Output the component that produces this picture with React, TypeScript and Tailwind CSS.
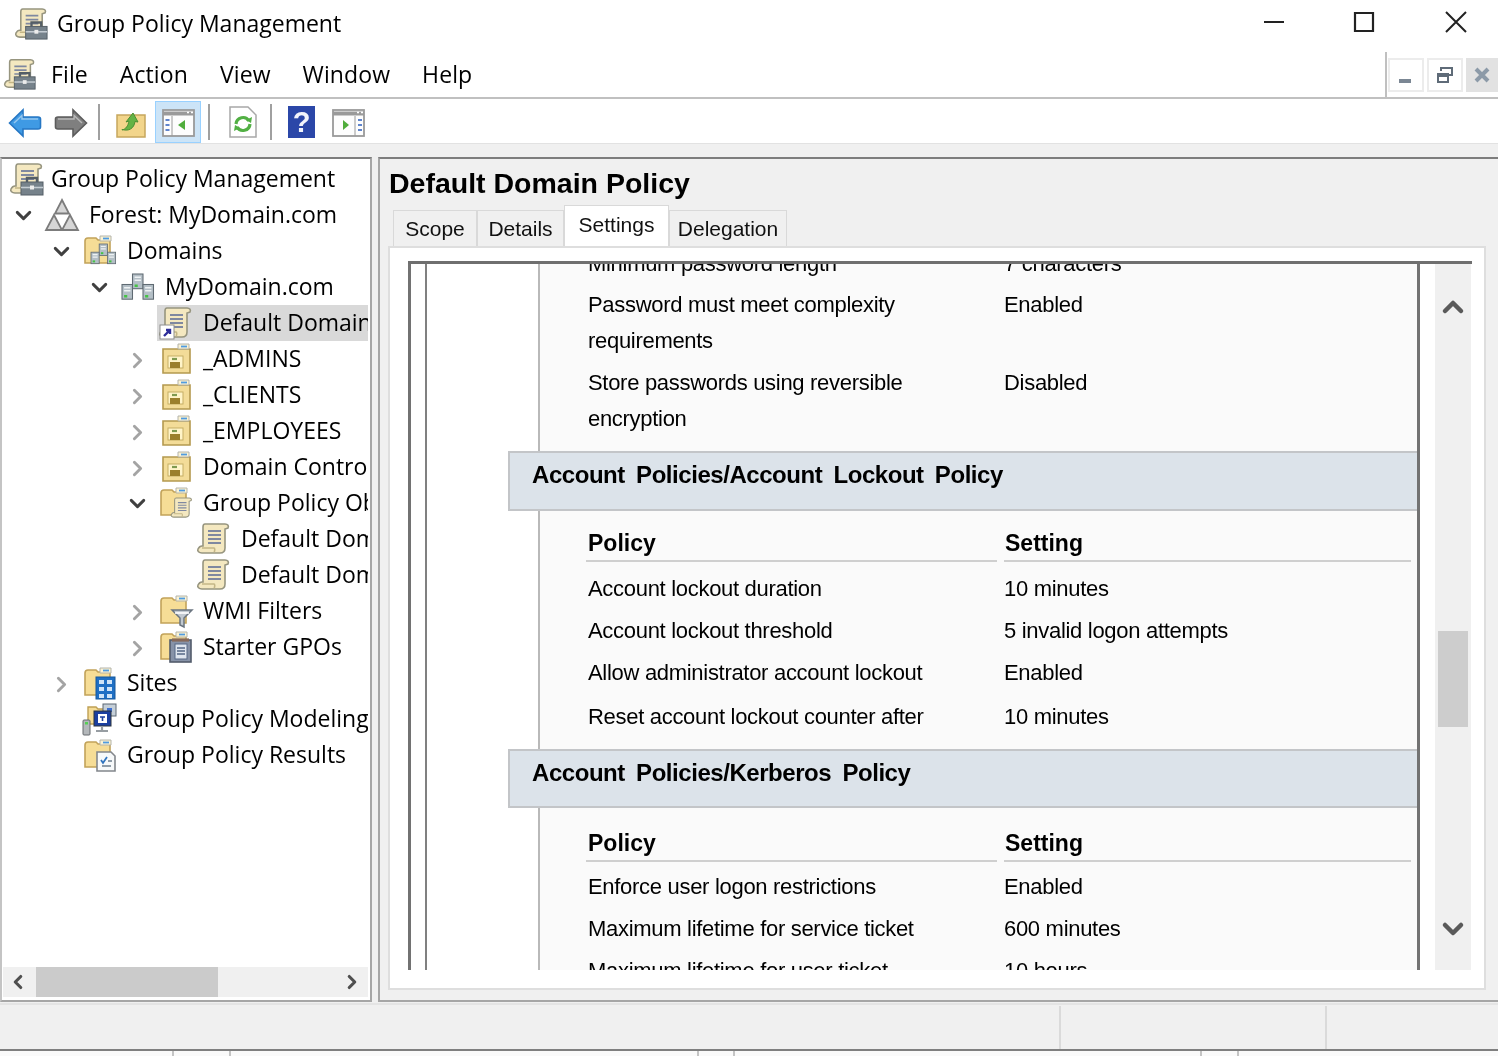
import type { ReactNode } from "react";
import { ChevronDown, ChevronLeft, ChevronRight, ChevronUp } from "lucide-react";

const ui = "font-['Open_Sans','Noto_Sans',sans-serif]";
const report = "font-['Liberation_Sans',Arial,sans-serif]";

function Svg({ size = 36, view = 36, children }: { size?: number; view?: number; children: ReactNode }) {
  return (
    <svg width={size} height={size} viewBox={`0 0 ${view} ${view}`} fill="none" className="shrink-0">
      {children}
    </svg>
  );
}

// parchment scroll used for all GPO style icons
function ScrollShape() {
  return (
    <>
      <path d="M9 3h20c3 0 4 2 3 4l-3 1v19c0 3-2 5-5 5H6c-3 0-5-2-4-4 .5-1 2-3 4-3h1V6c0-2 1-3 2-3z" fill="#f4e8c0" stroke="#97957f" strokeWidth="1.6" />
      <path d="M12 10h13M12 14h13M12 18h13M12 22h13" stroke="#7f88a0" strokeWidth="1.8" />
      <path d="M6 27h12c1 0 1 3 0 4" stroke="#c4b686" strokeWidth="1.6" />
    </>
  );
}

function GpmcIcon({ size = 36 }: { size?: number }) {
  return (
    <Svg size={size}>
      <ScrollShape />
      <rect x="12" y="21" width="22" height="13" fill="#76828b" stroke="#545e66" />
      <path d="M18 21v-4h10v4" stroke="#545e66" strokeWidth="2.4" />
      <path d="M12 26.500h22" stroke="#c4ccd2" strokeWidth="1.6" />
      <rect x="21" y="24.500" width="4" height="4" fill="#ececec" />
    </Svg>
  );
}

function GpoIcon() {
  return (
    <Svg>
      <ScrollShape />
    </Svg>
  );
}

function GpoLinkIcon() {
  return (
    <Svg>
      <ScrollShape />
      <rect x="2" y="20" width="14" height="14" fill="#fff" stroke="#8e8e8e" />
      <path d="M6 31l6-6M8 25h4v4" stroke="#2d2d9a" strokeWidth="2.4" />
    </Svg>
  );
}

function FolderShape() {
  return (
    <>
      <path d="M3 8c0-2 1-3 3-3h8l2 2h12v23H3z" fill="#f6dd96" stroke="#c2a35a" strokeWidth="1.6" />
      <path d="M18 3h11v5H18z" fill="#fbf3d4" stroke="#b4b4aa" />
      <path d="M21 5.500h6" stroke="#4f9be0" strokeWidth="1.8" />
    </>
  );
}

function OuIcon() {
  return (
    <Svg>
      <path d="M5 8h27v24H5z" fill="#f3dc98" stroke="#b4994f" strokeWidth="1.6" />
      <path d="M20 3h11v5H20z" fill="#fbf3d4" stroke="#b4b4aa" />
      <path d="M23 5.500h6" stroke="#4f9be0" strokeWidth="1.8" />
      <rect x="10" y="15" width="15" height="12" fill="#fff4c8" stroke="#c6ae64" />
      <rect x="12" y="21" width="10" height="6" fill="#9b7f2c" />
      <path d="M14 18h5" stroke="#7f9a50" strokeWidth="2.2" />
    </Svg>
  );
}

function Servers({ x = 0, y = 0, scale = 1 }: { x?: number; y?: number; scale?: number }) {
  const box = (bx: number, by: number, key: string) => (
    <g key={key}>
      <rect x={bx} y={by} width="10" height="14" fill="#b4bfc6" stroke="#5f6a72" />
      <path d={`M${bx + 2} ${by + 3}h6M${bx + 2} ${by + 6}h6`} stroke="#eef2f4" strokeWidth="1.4" />
      <rect x={bx + 2} y={by + 10} width="3" height="2.400" fill="#45c245" />
    </g>
  );
  return <g transform={`translate(${x} ${y}) scale(${scale})`}>{[box(10, 0, "a"), box(0, 10, "b"), box(20, 10, "c")]}</g>;
}

function DomainIcon() {
  return (
    <Svg>
      <Servers x={2} y={5} scale={1.05} />
    </Svg>
  );
}

function DomainsIcon() {
  return (
    <Svg>
      <FolderShape />
      <Servers x={9} y={11} scale={0.82} />
    </Svg>
  );
}

function ForestIcon() {
  return (
    <Svg>
      <path d="M18 3l7 13.500H11z" fill="#d6d6d6" stroke="#7c7c7c" strokeWidth="1.8" />
      <path d="M10 18l8 15H2z" fill="#d6d6d6" stroke="#7c7c7c" strokeWidth="1.8" />
      <path d="M26 18l8 15H18z" fill="#d6d6d6" stroke="#7c7c7c" strokeWidth="1.8" />
    </Svg>
  );
}

function GpoFolderIcon() {
  return (
    <Svg>
      <FolderShape />
      <g transform="translate(12 11) scale(.66)">
        <ScrollShape />
      </g>
    </Svg>
  );
}

function WmiIcon() {
  return (
    <Svg>
      <FolderShape />
      <path d="M14 17h20l-8 8v9l-4-2v-7z" fill="#c2c9d0" stroke="#6b7580" strokeWidth="1.5" />
      <path d="M17 20h14" stroke="#fff" strokeWidth="1.6" />
    </Svg>
  );
}

function StarterIcon() {
  return (
    <Svg>
      <FolderShape />
      <rect x="12" y="11" width="21" height="22" fill="#8793a8" stroke="#535c6b" strokeWidth="1.6" />
      <path d="M14 11h17" stroke="#86695a" strokeWidth="3.2" />
      <rect x="17" y="15" width="12" height="15" fill="#dfe6ef" stroke="#566886" />
      <path d="M19 19h8M19 22h8M19 25h8" stroke="#566886" strokeWidth="1.5" />
    </Svg>
  );
}

function SitesIcon() {
  return (
    <Svg>
      <FolderShape />
      <rect x="14" y="12" width="19" height="22" fill="#1f6fc4" stroke="#17589c" />
      <path d="M17 15h5v4h-5zM25 15h5v4h-5zM17 22h5v4h-5zM25 22h5v4h-5zM17 29h5v4h-5zM25 29h5v4h-5z" fill="#cfe4f8" />
    </Svg>
  );
}

function ModelingIcon() {
  return (
    <Svg>
      <path d="M6 6h8l2 2h10v15H6z" fill="#f5dc96" stroke="#bfa055" strokeWidth="1.4" />
      <rect x="21" y="3" width="13" height="12" fill="#c5cfd8" stroke="#5c6874" />
      <path d="M25 7h5v4h-5z" fill="#3d6fd0" />
      <rect x="12" y="10" width="17" height="15" fill="#1b3fa0" stroke="#2c343c" />
      <path d="M16 13h9v9h-9z" fill="#fff" />
      <path d="M18 16h5M20.500 16v4" stroke="#1b3fa0" strokeWidth="1.600" />
      <rect x="1" y="19" width="7" height="15" rx="1" fill="#b4b8bb" stroke="#666b6f" />
      <rect x="3" y="21" width="3" height="2.500" fill="#55cf55" />
      <path d="M14 30h12M20 25v5" stroke="#979da2" strokeWidth="2.200" />
    </Svg>
  );
}

function ResultsIcon() {
  return (
    <Svg>
      <FolderShape />
      <path d="M15 15h14l4 4v15H15z" fill="#f7f9fa" stroke="#83878c" strokeWidth="1.6" />
      <path d="M19 23l2 3 4-6" stroke="#2f74bf" strokeWidth="1.8" />
      <path d="M20 29h9M26 24h4" stroke="#6f7f8e" strokeWidth="1.6" />
    </Svg>
  );
}

function BackArrow({ color, edge, flip }: { color: string; edge: string; flip?: boolean }) {
  return (
    <svg width="34" height="30" viewBox="0 0 34 30" className={`mt-[2px] ${flip ? "-scale-x-100" : ""}`}>
      <path d="M1.500 15L15 2v7h15c1.500 0 2.500 1 2.500 2v8c0 1-1 2-2.500 2H15v7z" fill={color} stroke={edge} strokeWidth="1.6" />
      <path d="M6 15L14 7.500V11h16" stroke="#fff" strokeOpacity=".45" strokeWidth="1.500" fill="none" />
    </svg>
  );
}

function PaneIcon({ right }: { right?: boolean }) {
  return (
    <svg width="33" height="28" viewBox="0 0 33 28" className="mt-[2px]">
      <rect x="1" y="1" width="31" height="26" fill="#fdfdfd" stroke="#9a9a9a" strokeWidth="1.800" />
      <path d="M1 4.500h31" stroke="#9a9a9a" strokeWidth="4" />
      <path d="M25 3.500h2M29 3.500h2" stroke="#fff" strokeWidth="1.500" />
      {right ? (
        <>
          <path d="M23 7v20" stroke="#9a9a9a" />
          <path d="M26 11h4M26 16h4M26 21h4" stroke="#5f84cc" strokeWidth="2.200" />
          <path d="M11 11l6 5-6 5z" fill="#50ad3c" />
        </>
      ) : (
        <>
          <path d="M10 7v20" stroke="#9a9a9a" />
          <path d="M3.500 11h4M3.500 16h4M3.500 21h4" stroke="#5f84cc" strokeWidth="2.200" />
          <path d="M23 11l-7 5 7 5z" fill="#50ad3c" />
        </>
      )}
    </svg>
  );
}

function ToolbarSep() {
  return <div className="mx-[7px] h-[36px] w-[2px] bg-[#a0a0a0]" />;
}

type Node = { label: string; depth: number; icon: ReactNode; arrow?: "open" | "closed"; selected?: boolean };

const tree: Node[] = [
  { label: "Group Policy Management", depth: 0, icon: <GpmcIcon /> },
  { label: "Forest: MyDomain.com", depth: 1, icon: <ForestIcon />, arrow: "open" },
  { label: "Domains", depth: 2, icon: <DomainsIcon />, arrow: "open" },
  { label: "MyDomain.com", depth: 3, icon: <DomainIcon />, arrow: "open" },
  { label: "Default Domain Policy", depth: 4, icon: <GpoLinkIcon />, selected: true },
  { label: "_ADMINS", depth: 4, icon: <OuIcon />, arrow: "closed" },
  { label: "_CLIENTS", depth: 4, icon: <OuIcon />, arrow: "closed" },
  { label: "_EMPLOYEES", depth: 4, icon: <OuIcon />, arrow: "closed" },
  { label: "Domain Controllers", depth: 4, icon: <OuIcon />, arrow: "closed" },
  { label: "Group Policy Objects", depth: 4, icon: <GpoFolderIcon />, arrow: "open" },
  { label: "Default Domain Controllers Policy", depth: 5, icon: <GpoIcon /> },
  { label: "Default Domain Policy", depth: 5, icon: <GpoIcon /> },
  { label: "WMI Filters", depth: 4, icon: <WmiIcon />, arrow: "closed" },
  { label: "Starter GPOs", depth: 4, icon: <StarterIcon />, arrow: "closed" },
  { label: "Sites", depth: 2, icon: <SitesIcon />, arrow: "closed" },
  { label: "Group Policy Modeling", depth: 2, icon: <ModelingIcon /> },
  { label: "Group Policy Results", depth: 2, icon: <ResultsIcon /> },
];

function TreeRow({ node }: { node: Node }) {
  if (node.depth === 0) {
    return (
      <div className="flex h-[36px] items-center whitespace-nowrap pl-[7px]">
        <div className="flex w-[42px] items-center">{node.icon}</div>
        <span className="-translate-y-px">{node.label}</span>
      </div>
    );
  }
  return (
    <div className="flex h-[36px] items-center whitespace-nowrap" style={{ paddingLeft: 3 + 38 * (node.depth - 1) }}>
      <div className="flex w-[38px] shrink-0 justify-center">
        {node.arrow === "open" && <ChevronDown size={25} strokeWidth={2.8} className="-ml-[2px] text-[#404040]" />}
        {node.arrow === "closed" && <ChevronRight size={25} strokeWidth={2.8} className="-ml-[1px] mt-[3px] text-[#a4a4a4]" />}
      </div>
      <div className={`flex h-full flex-1 items-center ${node.selected ? "bg-[#d9d9d9]" : ""}`}>
        <div className="flex w-[46px] shrink-0 justify-center pr-[8px]">{node.icon}</div>
        <span className="-translate-y-px">{node.label}</span>
      </div>
    </div>
  );
}

type Row = { policy: string[]; value: string; cls?: string };

function PolicyRow({ row }: { row: Row }) {
  return (
    <div className={`grid grid-cols-[416px_1fr] pl-[48px] text-[22px] leading-[36px] tracking-[-0.3px] text-black ${row.cls ?? ""}`}>
      <div>
        {row.policy.map((line) => (
          <div key={line}>{line}</div>
        ))}
      </div>
      <div>{row.value}</div>
    </div>
  );
}

function SectionBar({ title, cls }: { title: string; cls: string }) {
  return (
    <div className={`-ml-[32px] border-y-2 border-l-2 border-[#c3c5c8] bg-[#dce3ea] pl-[22px] text-[24px] font-bold leading-[32px] tracking-[-0.45px] text-black [word-spacing:5px] ${cls}`}>
      {title}
    </div>
  );
}

function PolicyHead({ cls }: { cls: string }) {
  return (
    <div className={`grid grid-cols-[411px_407px] gap-x-[7px] pl-[46px] text-[23px] font-bold leading-[34px] text-black ${cls}`}>
      <div className="border-b-2 border-[#cfcfcf] pl-[2px]">Policy</div>
      <div className="border-b-2 border-[#cfcfcf] pl-[1px]">Setting</div>
    </div>
  );
}

export default function App() {
  return (
    <div className={`flex h-[1056px] w-[1498px] flex-col overflow-hidden bg-[#f0f0f0] text-black blur-[0.4px] ${ui}`}>
      {/* title bar */}
      <div className="flex h-[52px] items-start bg-white">
        <div className="ml-[14px] mt-[6px]">
          <GpmcIcon size={35} />
        </div>
        <div className="ml-[8px] mt-[6px] text-[23px] leading-[34px]">Group Policy Management</div>
        <div className="ml-auto flex pr-[30px] pt-[10px]">
          <svg width="24" height="24" viewBox="0 0 24 24" className="mr-[66px]">
            <path d="M2 12h20" stroke="#222" strokeWidth="2" />
          </svg>
          <svg width="24" height="24" viewBox="0 0 24 24" className="mr-[68px]">
            <path d="M3 3h18v18H3z" stroke="#222" strokeWidth="2.200" fill="none" />
          </svg>
          <svg width="24" height="24" viewBox="0 0 24 24">
            <path d="M2 2l20 20M22 2L2 22" stroke="#222" strokeWidth="2" />
          </svg>
        </div>
      </div>

      {/* menu bar */}
      <div className="flex h-[47px] bg-white">
        <div className="flex w-[1387px] items-center border-b-2 border-r-2 border-[#c0c0c0] pb-[1px]">
          <div className="ml-[3px] w-[48px]">
            <GpmcIcon size={34} />
          </div>
          <div className="flex gap-[32px] text-[23px] leading-[34px] tracking-[0.1px]">
            <span>File</span>
            <span>Action</span>
            <span>View</span>
            <span>Window</span>
            <span>Help</span>
          </div>
        </div>
        <div className="flex flex-1 items-start gap-[3px] border-b-2 border-[#c0c0c0] pl-[1px] pt-[6px]">
          <div className="flex h-[34px] w-[36px] items-end justify-center border-2 border-[#ececec] pb-[7px] pr-[2px]">
            <div className="h-[4px] w-[12px] bg-[#7b8794]" />
          </div>
          <div className="flex h-[34px] w-[36px] items-center justify-center border-2 border-[#ececec]">
            <svg width="18" height="18" viewBox="0 0 18 18" fill="none" stroke="#5f6b78" strokeWidth="2">
              <path d="M5 5V2h11v7h-4" />
              <path d="M2 8h10v8H2zM2 10h10" />
            </svg>
          </div>
          <div className="flex h-[34px] flex-1 items-center justify-center bg-[#e2e2e2]">
            <svg width="16" height="16" viewBox="0 0 16 16">
              <path d="M2 2l12 12M14 2L2 14" stroke="#8c9aa8" strokeWidth="4" />
            </svg>
          </div>
        </div>
      </div>

      {/* toolbar */}
      <div className="flex h-[45px] items-center border-b border-[#e2e2e2] bg-white pt-[2px]">
        <div className="ml-[8px] flex gap-[12px]">
          <BackArrow color="#3f9ae4" edge="#2677c4" />
          <BackArrow color="#7f7f7f" edge="#5c5c5c" flip />
        </div>
        <div className="ml-[3px]">
          <ToolbarSep />
        </div>
        <svg width="30" height="30" viewBox="0 0 30 30" className="ml-[9px] mt-[2px]">
          <path d="M1 7h28v22H1z" fill="#f2d58b" stroke="#c6a75e" strokeWidth="1.500" />
          <path d="M6 22c4-1 6-4 7-9l-3 1 7-9 5 9-3-.5c-1 7-6 10-13 8z" fill="#64b345" stroke="#4b8f33" />
        </svg>
        <div className="ml-[9px] flex h-[42px] w-[46px] items-center justify-center border border-[#99d1ff] bg-[#cce4f7]">
          <PaneIcon />
        </div>
        <ToolbarSep />
        <svg width="28" height="32" viewBox="0 0 28 32" className="ml-[12px]">
          <path d="M1 1h18l8 8v22H1z" fill="#fff" stroke="#a8a8a8" strokeWidth="1.500" />
          <path d="M7 18a7 7 0 0 1 13-3M21 18a7 7 0 0 1-13 3" stroke="#52b044" strokeWidth="3.200" fill="none" />
          <path d="M17 14l5 3 1-6zM11 22l-5-3-1 6z" fill="#52b044" />
        </svg>
        <div className="ml-[6px]">
          <ToolbarSep />
        </div>
        <div className="ml-[9px] flex h-[32px] w-[27px] items-center justify-center bg-[#2b47a8] text-[29px] font-bold leading-none text-[#f2f4fb] [font-family:'Liberation_Sans',sans-serif]">
          ?
        </div>
        <div className="ml-[17px]">
          <PaneIcon right />
        </div>
      </div>

      <div className="h-[13px]" />

      {/* main panels */}
      <div className="flex h-[845px] gap-[6px]">
        {/* console tree */}
        <div className="flex w-[372px] flex-col border-b-2 border-l-2 border-r-2 border-t-2 border-[#a6a6a6] border-l-[#c4c4c4] border-t-[#7d7d7d] bg-white text-[23px]">
          <div className="w-[366px] flex-1 overflow-hidden pt-[2px] leading-[34px]">
            {tree.map((node) => (
              <TreeRow key={`${node.label}-${node.depth}`} node={node} />
            ))}
          </div>
          <div className="mb-[3px] ml-[1px] flex h-[30px] w-[365px] items-center bg-[#f0f0f0]">
            <div className="flex w-[33px] justify-center pr-[4px]">
              <ChevronLeft size={22} strokeWidth={3.4} className="text-[#4f4f4f]" />
            </div>
            <div className="h-full w-[182px] bg-[#cbcbcb]" />
            <div className="ml-auto flex w-[33px] justify-center">
              <ChevronRight size={22} strokeWidth={3.4} className="text-[#4f4f4f]" />
            </div>
          </div>
        </div>

        {/* details pane */}
        <div className="flex flex-1 flex-col border-b-2 border-l-2 border-t-2 border-[#a6a6a6] border-t-[#7d7d7d]">
          <div className={`pl-[9px] pt-[7px] text-[28.5px] font-bold leading-[34px] text-black ${report}`}>Default Domain Policy</div>
          <div className={`ml-[13px] mt-[6px] flex h-[40px] items-end text-[21px] text-[#111] ${report}`}>
            {[
              ["Scope", "w-[84px]"],
              ["Details", "w-[87px]"],
            ].map(([name, width]) => (
              <div key={name} className={`flex h-[36px] items-center justify-center border border-b-0 border-[#d9d9d9] bg-[#f0f0f0] ${width}`}>
                {name}
              </div>
            ))}
            <div className="relative z-10 flex h-[41px] w-[105px] items-start justify-center border border-b-0 border-[#d9d9d9] bg-white pt-[6px] leading-[26px]">
              Settings
            </div>
            <div className="flex h-[36px] w-[118px] items-center justify-center border border-b-0 border-[#d9d9d9] bg-[#f0f0f0]">Delegation</div>
          </div>
          <div className="ml-[8px] mr-[12px] h-[744px] border-2 border-[#dedede] bg-white pl-[18px] pr-[12px] pt-[13px]">
            <div className={`flex h-[709px] border-t-[3px] border-[#6f6f6f] ${report}`}>
              <div className="flex w-[1012px] shrink-0 border-x-[3px] border-[#727272]">
                <div className="w-[16px] border-r-2 border-[#808080]" />
                <div className="flex-1 overflow-hidden pl-[111px]">
                  <div className="-mt-[18px] min-h-[760px] border-l-2 border-[#b9b9b9] bg-[#fafafa]">
                    <PolicyRow row={{ policy: ["Minimum password length"], value: "7 characters" }} />
                    <PolicyRow row={{ policy: ["Password must meet complexity", "requirements"], value: "Enabled", cls: "mt-[5px]" }} />
                    <PolicyRow row={{ policy: ["Store passwords using reversible", "encryption"], value: "Disabled", cls: "mt-[6px]" }} />
                    <SectionBar title="Account Policies/Account Lockout Policy" cls="mt-[14px] h-[60px] pt-[6px]" />
                    <PolicyHead cls="pb-px pt-[15px]" />
                    <PolicyRow row={{ policy: ["Account lockout duration"], value: "10 minutes", cls: "mt-[8px]" }} />
                    <PolicyRow row={{ policy: ["Account lockout threshold"], value: "5 invalid logon attempts", cls: "mt-[6px]" }} />
                    <PolicyRow row={{ policy: ["Allow administrator account lockout"], value: "Enabled", cls: "mt-[6px]" }} />
                    <PolicyRow row={{ policy: ["Reset account lockout counter after"], value: "10 minutes", cls: "mt-[8px]" }} />
                    <SectionBar title="Account Policies/Kerberos Policy" cls="mt-[14px] h-[59px] pt-[6px]" />
                    <PolicyHead cls="pt-[18px]" />
                    <PolicyRow row={{ policy: ["Enforce user logon restrictions"], value: "Enabled", cls: "mt-[7px]" }} />
                    <PolicyRow row={{ policy: ["Maximum lifetime for service ticket"], value: "600 minutes", cls: "mt-[6px]" }} />
                    <PolicyRow row={{ policy: ["Maximum lifetime for user ticket"], value: "10 hours", cls: "mt-[6px]" }} />
                  </div>
                </div>
              </div>
              <div className="w-[15px]" />
              <div className="flex w-[36px] flex-col items-center bg-[#f0f0f0]">
                <ChevronUp size={32} strokeWidth={3.4} className="mt-[27px] text-[#5a5a5a]" />
                <div className="mt-[308px] h-[96px] w-[30px] bg-[#cdcdcd]" />
                <ChevronDown size={32} strokeWidth={3.4} className="mt-[186px] text-[#5a5a5a]" />
              </div>
            </div>
          </div>
        </div>
      </div>

      {/* status bar */}
      <div className="mt-[1px] flex h-[46px] border-t-2 border-[#e4e4e4] pt-[1px]">
        <div className="w-[1061px] border-r-2 border-[#dadada]" />
        <div className="w-[266px] border-r-2 border-[#dadada]" />
      </div>
      <div className="flex flex-1 border-t-2 border-[#7f7f7f] bg-[#fafafa]">
        <div className="ml-[172px] w-[59px] border-x-2 border-[#c4c4c4]" />
        <div className="ml-[466px] w-[38px] border-x-2 border-[#c4c4c4]" />
        <div className="ml-[465px] w-[39px] border-x-2 border-[#c4c4c4]" />
      </div>
    </div>
  );
}
